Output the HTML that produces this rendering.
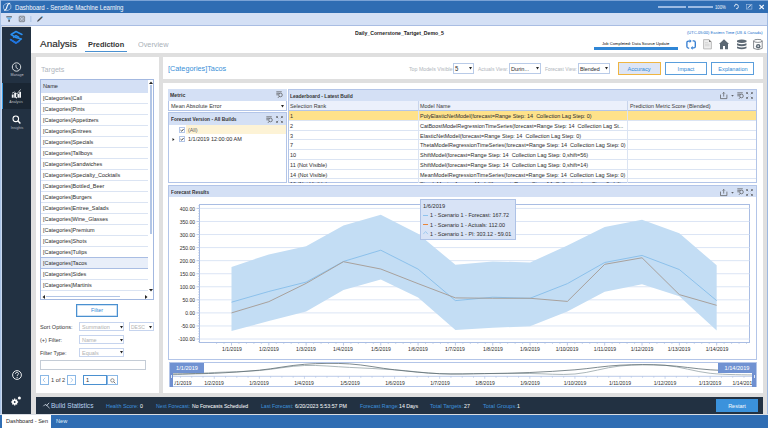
<!DOCTYPE html>
<html><head><meta charset="utf-8">
<style>
*{box-sizing:border-box;margin:0;padding:0}
html,body{width:768px;height:428px;overflow:hidden;background:#dfdfdf;font-family:"Liberation Sans",sans-serif;color:#333}
.a{position:absolute}
.t{position:absolute;white-space:pre;line-height:1}
.k{-webkit-text-stroke:0.03px currentColor}
svg{overflow:visible}
</style></head><body>
<div class="a" style="left:0px;top:0px;width:768px;height:13px;background:#2f6db3"></div>
<div class="a" style="left:0px;top:0px;width:768px;height:1px;background:#7aa3d6"></div>
<div class="a" style="left:0px;top:13px;width:768px;height:12px;background:#d4e0f5"></div>
<div class="a" style="left:0px;top:25px;width:768px;height:1px;background:#a9bde3"></div>
<div class="a" style="left:0px;top:0px;width:1px;height:428px;background:#a9c3e6"></div>
<div class="a" style="left:1px;top:26px;width:1px;height:389px;background:#c9d8ee"></div>
<div class="a" style="left:767px;top:13px;width:1px;height:402px;background:#9db8e0"></div>
<svg class="a" style="left:2px;top:1px;" width="12" height="12" viewBox="2 1 12 12"><ellipse cx="7.2" cy="6.9" rx="3.9" ry="3.5" fill="none" stroke="#c9d9ef" stroke-width="0.6" transform="rotate(-20 7.2 6.9)"/><path d="M10.2 3.2C8.2 3.2 7.6 4.2 7.2 6.2S6.4 10 4.2 10.4" fill="none" stroke="#f4f8fc" stroke-width="1.1"/></svg>
<div class="t k" style="font-size:6.55px;color:#f2f6fc;top:5px;transform:scaleX(0.9282);left:15px;transform-origin:0 0;">Dashboard - Sensible Machine Learning</div>
<div class="a" style="left:658px;top:6px;width:28px;height:2px;background:#9dbbe3"></div>
<div class="a" style="left:688px;top:6px;width:25px;height:2px;background:#9dbbe3"></div>
<div class="t k" style="font-size:4.50px;color:#e8eef8;top:6px;transform:scaleX(0.9333);left:715.3px;transform-origin:0 0;">100%</div>
<svg class="a" style="left:720px;top:0px;" width="48" height="13" viewBox="720 0 48 13"><g fill="none" stroke="#e3ebf6" stroke-width="0.9"><path d="M734.4 6.6Q734.4 4.4 736.4 4.4Q738.4 4.4 738.4 6.6Q738.4 8.6 736.4 8.6"/></g><path d="M735.6 3.6l1.3 0.8-1.3 0.9z" fill="#e3ebf6"/><path d="M737.2 7.8l-1.2 0.8 1.2 0.9z" fill="#e3ebf6"/><rect x="746.3" y="4.4" width="5.6" height="4.7" fill="none" stroke="#a7c1e4" stroke-width="0.6"/><path d="M747.6 8L750.4 5.6" stroke="#eef3fa" stroke-width="0.9"/><path d="M749.4 5.3h1.3v1.2z" fill="#eef3fa"/><path d="M759.5 5l4.3 4M763.8 5l-4.3 4" stroke="#f2f6fc" stroke-width="1.1"/></svg>
<svg class="a" style="left:0px;top:13px;" width="48" height="13" viewBox="0 13 48 13"><path d="M6.3 16.3h5.6v1.1H6.3z" fill="#4a4f55"/><path d="M6.6 17.6h5L10 19.8H8.2z" fill="#69b6ee"/><path d="M8.3 19.8h1.6v1.9H8.3z" fill="#4a4f55"/><rect x="19.2" y="16.2" width="5.4" height="5.5" rx="0.6" fill="none" stroke="#6b6f75" stroke-width="0.7"/><g fill="none" stroke="#6b6f75" stroke-width="0.55"><circle cx="20.6" cy="17.6" r="0.9"/><circle cx="23.2" cy="17.6" r="0.9"/><circle cx="20.6" cy="20.3" r="0.9"/><circle cx="23.2" cy="20.3" r="0.9"/></g><rect x="30.1" y="16" width="1.4" height="6" fill="#b6cbea"/><path d="M37 21.8L37.6 20.2 41.6 16.6 42.6 17.6 38.6 21.2z" fill="#4a4f55"/><path d="M41.4 16.8L42.2 16 43.2 17 42.4 17.8z" fill="#5bb0ec"/></svg>
<div class="a" style="left:2px;top:27px;width:29px;height:387px;background:#223142"></div>
<div class="a" style="left:2px;top:83px;width:29px;height:26px;background:#1a2633"></div>
<div class="a" style="left:2px;top:83px;width:1px;height:26px;background:#3b9be2"></div>
<svg class="a" style="left:6px;top:28px;" width="20" height="20" viewBox="6 28 20 20"><g fill="none" stroke-width="1.5" stroke-linejoin="round" stroke-linecap="round"><path d="M22 34.5L16 31.5 11.1 34.5 16 37.6 21.4 39 16 43 10.6 39.6" stroke="#2a8ff0"/><path d="M13.6 37.2L16 35.6 18.6 37.2" stroke="#2a8ff0"/><path d="M10.6 39.6L16 43 19 41.3" stroke="#1f72e0"/></g></svg>
<svg class="a" style="left:6px;top:58px;" width="22" height="22" viewBox="6 58 22 22"><circle cx="16.5" cy="67" r="4.2" fill="none" stroke="#f2f4f6" stroke-width="0.85"/><path d="M16 64.6V67.4L18.3 69.3" fill="none" stroke="#f2f4f6" stroke-width="0.8"/></svg>
<div class="t k" style="font-size:3.85px;color:#aeb6bf;top:74px;transform:scaleX(0.9351);left:-83.4px;width:200px;text-align:center;transform-origin:50% 0;">Manage</div>
<svg class="a" style="left:4px;top:84px;" width="26" height="24" viewBox="4 84 26 24"><g fill="#f4f6f8"><rect x="11.8" y="94.5" width="1.8" height="3.2"/><rect x="14.2" y="93" width="1.9" height="4.7"/><rect x="17.5" y="93.8" width="1.7" height="3.9"/><rect x="19.3" y="91.8" width="1.7" height="5.9"/><circle cx="16.4" cy="97.7" r="0.7"/></g><path d="M12 93.2L14.4 92 16.9 94 20.6 89.4" fill="none" stroke="#f4f6f8" stroke-width="0.7"/></svg>
<div class="t k" style="font-size:3.85px;color:#aeb6bf;top:101px;transform:scaleX(0.9351);left:-83.6px;width:200px;text-align:center;transform-origin:50% 0;">Analysis</div>
<svg class="a" style="left:12px;top:115px;" width="9" height="9" viewBox="0 0 9 9"><circle cx="3.8" cy="3.8" r="2.8" fill="none" stroke="#fff" stroke-width="1.1"/><path d="M5.8 5.8l2.6 2.6" stroke="#fff" stroke-width="1.4"/></svg>
<div class="t k" style="font-size:3.85px;color:#aeb6bf;top:127px;transform:scaleX(0.9351);left:-83.4px;width:200px;text-align:center;transform-origin:50% 0;">Insights</div>
<svg class="a" style="left:12px;top:370px;" width="10" height="10" viewBox="0 0 10 10"><circle cx="5" cy="5" r="4.4" fill="none" stroke="#fff" stroke-width="0.9"/><path d="M3.5 3.9c0-1 .7-1.6 1.5-1.6s1.5.6 1.5 1.4c0 1-1.4 1.1-1.4 2.2" fill="none" stroke="#fff" stroke-width="0.9"/><circle cx="5.1" cy="7.4" r="0.55" fill="#fff"/></svg>
<svg class="a" style="left:10px;top:396px;" width="12" height="10" viewBox="0 0 12 10"><circle cx="4.7" cy="6" r="2.6" fill="#fff"/><g stroke="#fff" stroke-width="1.3"><path d="M4.7 2.6v6.8M1.3 6h6.8M2.3 3.6l4.8 4.8M7.1 3.6l-4.8 4.8"/></g><circle cx="4.7" cy="6" r="0.9" fill="#223142"/><circle cx="9.4" cy="2" r="1.5" fill="#fff"/></svg>
<div class="a" style="left:31px;top:26px;width:736px;height:27px;background:#fff"></div>
<div class="t" style="font-size:9.95px;color:#262626;top:39px;left:40px;transform-origin:0 0;-webkit-text-stroke:0.15px #262626;">Analysis</div>
<div class="t" style="font-size:7.90px;color:#333;top:41px;transform:scaleX(0.9367);font-weight:bold;left:88.1px;transform-origin:0 0;">Prediction</div>
<div class="a" style="left:85px;top:51px;width:42px;height:1px;background:#4a90d0"></div>
<div class="t" style="font-size:7.80px;color:#a9b0b8;top:41px;transform:scaleX(0.9359);left:138.3px;transform-origin:0 0;">Overview</div>
<div class="t" style="font-size:5.55px;color:#222;top:31px;transform:scaleX(0.9315);font-weight:bold;left:354.5px;transform-origin:0 0;">Daily_Cornerstone_Tartget_Demo_5</div>
<div class="t k" style="font-size:4.30px;color:#2f7ad0;top:31px;transform:scaleX(0.9372);left:686.9px;transform-origin:0 0;">(UTC-05:00) Eastern Time (US &amp; Canada)</div>
<div class="t k" style="font-size:4.40px;color:#222;top:42px;transform:scaleX(0.9386);left:602px;transform-origin:0 0;">Job Completed: Data Source Update</div>
<div class="a" style="left:594px;top:47px;width:84px;height:3px;background:#2f86d6"></div>
<div class="a" style="left:36px;top:57px;width:123px;height:336px;background:#fff"></div>
<div class="t" style="font-size:7.65px;color:#b0b6bd;top:66px;transform:scaleX(0.9346);left:40.5px;transform-origin:0 0;">Targets</div>
<div class="a" style="left:40px;top:79px;width:114px;height:221px;border:1px solid #a3b8e0;background:#fff"></div>
<div class="a" style="left:41px;top:80px;width:107px;height:12.6px;background:#d4e0f5"></div>
<div class="t k" style="font-size:6.00px;color:#333;top:83px;transform:scaleX(0.9333);left:43px;transform-origin:0 0;">Name</div>
<div class="a" style="left:41px;top:103.0px;width:107px;height:0.7px;background:#dbe4f3"></div>
<div class="t k" style="font-size:5.90px;color:#333;top:96px;transform:scaleX(0.9322);left:43px;transform-origin:0 0;">[Categories]Call</div>
<div class="a" style="left:41px;top:114.0px;width:107px;height:0.7px;background:#dbe4f3"></div>
<div class="t k" style="font-size:5.90px;color:#333;top:107px;transform:scaleX(0.9322);left:43px;transform-origin:0 0;">[Categories]Pints</div>
<div class="a" style="left:41px;top:125.0px;width:107px;height:0.7px;background:#dbe4f3"></div>
<div class="t k" style="font-size:5.90px;color:#333;top:118px;transform:scaleX(0.9322);left:43px;transform-origin:0 0;">[Categories]Appetizers</div>
<div class="a" style="left:41px;top:136.0px;width:107px;height:0.7px;background:#dbe4f3"></div>
<div class="t k" style="font-size:5.90px;color:#333;top:129px;transform:scaleX(0.9322);left:43px;transform-origin:0 0;">[Categories]Entrees</div>
<div class="a" style="left:41px;top:147.0px;width:107px;height:0.7px;background:#dbe4f3"></div>
<div class="t k" style="font-size:5.90px;color:#333;top:140px;transform:scaleX(0.9322);left:43px;transform-origin:0 0;">[Categories]Specials</div>
<div class="a" style="left:41px;top:158.0px;width:107px;height:0.7px;background:#dbe4f3"></div>
<div class="t k" style="font-size:5.90px;color:#333;top:151px;transform:scaleX(0.9322);left:43px;transform-origin:0 0;">[Categories]Tallboys</div>
<div class="a" style="left:41px;top:169.0px;width:107px;height:0.7px;background:#dbe4f3"></div>
<div class="t k" style="font-size:5.90px;color:#333;top:162px;transform:scaleX(0.9322);left:43px;transform-origin:0 0;">[Categories]Sandwiches</div>
<div class="a" style="left:41px;top:180.0px;width:107px;height:0.7px;background:#dbe4f3"></div>
<div class="t k" style="font-size:5.90px;color:#333;top:173px;transform:scaleX(0.9322);left:43px;transform-origin:0 0;">[Categories]Specialty_Cocktails</div>
<div class="a" style="left:41px;top:191.0px;width:107px;height:0.7px;background:#dbe4f3"></div>
<div class="t k" style="font-size:5.90px;color:#333;top:184px;transform:scaleX(0.9322);left:43px;transform-origin:0 0;">[Categories]Bottled_Beer</div>
<div class="a" style="left:41px;top:202.0px;width:107px;height:0.7px;background:#dbe4f3"></div>
<div class="t k" style="font-size:5.90px;color:#333;top:195px;transform:scaleX(0.9322);left:43px;transform-origin:0 0;">[Categories]Burgers</div>
<div class="a" style="left:41px;top:213.0px;width:107px;height:0.7px;background:#dbe4f3"></div>
<div class="t k" style="font-size:5.90px;color:#333;top:206px;transform:scaleX(0.9322);left:43px;transform-origin:0 0;">[Categories]Entree_Salads</div>
<div class="a" style="left:41px;top:224.0px;width:107px;height:0.7px;background:#dbe4f3"></div>
<div class="t k" style="font-size:5.90px;color:#333;top:217px;transform:scaleX(0.9322);left:43px;transform-origin:0 0;">[Categories]Wine_Glasses</div>
<div class="a" style="left:41px;top:235.0px;width:107px;height:0.7px;background:#dbe4f3"></div>
<div class="t k" style="font-size:5.90px;color:#333;top:228px;transform:scaleX(0.9322);left:43px;transform-origin:0 0;">[Categories]Premium</div>
<div class="a" style="left:41px;top:246.0px;width:107px;height:0.7px;background:#dbe4f3"></div>
<div class="t k" style="font-size:5.90px;color:#333;top:239px;transform:scaleX(0.9322);left:43px;transform-origin:0 0;">[Categories]Shots</div>
<div class="a" style="left:41px;top:257.0px;width:107px;height:0.7px;background:#dbe4f3"></div>
<div class="t k" style="font-size:5.90px;color:#333;top:250px;transform:scaleX(0.9322);left:43px;transform-origin:0 0;">[Categories]Tulips</div>
<div class="a" style="left:41px;top:257.3px;width:107px;height:11.4px;background:#e8eef9;border-top:1px solid #a9bde3;border-bottom:1px solid #a9bde3"></div>
<div class="t k" style="font-size:5.90px;color:#333;top:261px;transform:scaleX(0.9322);left:43px;transform-origin:0 0;">[Categories]Tacos</div>
<div class="a" style="left:41px;top:279.0px;width:107px;height:0.7px;background:#dbe4f3"></div>
<div class="t k" style="font-size:5.90px;color:#333;top:272px;transform:scaleX(0.9322);left:43px;transform-origin:0 0;">[Categories]Sides</div>
<div class="a" style="left:41px;top:290.0px;width:107px;height:0.7px;background:#dbe4f3"></div>
<div class="t k" style="font-size:5.90px;color:#333;top:283px;transform:scaleX(0.9322);left:43px;transform-origin:0 0;">[Categories]Martinis</div>
<div class="a" style="left:148px;top:80px;width:5px;height:219px;background:#fff"></div>
<svg class="a" style="left:149px;top:81px;" width="4" height="3" viewBox="0 0 4 3"><path d="M0 3L2 0.5 4 3z" fill="#222"/></svg>
<div class="a" style="left:150px;top:85px;width:1.6px;height:149px;background:#b3c6e6"></div>
<svg class="a" style="left:149px;top:289px;" width="4" height="3" viewBox="0 0 4 3"><path d="M0 0L2 2.5 4 0z" fill="#222"/></svg>
<div class="a" style="left:41px;top:292px;width:107px;height:7px;background:#fff"></div>
<svg class="a" style="left:42px;top:294.5px;" width="3" height="4" viewBox="0 0 3 4"><path d="M3 0L0.5 2 3 4z" fill="#222"/></svg>
<div class="a" style="left:46px;top:295.6px;width:74px;height:1.4px;background:#b3c6e6"></div>
<svg class="a" style="left:145px;top:294.5px;" width="3" height="4" viewBox="0 0 3 4"><path d="M0 0L2.5 2 0 4z" fill="#222"/></svg>
<div class="a" style="left:76px;top:304px;width:42.4px;height:12.5px;border:1px solid #4a90d0;box-shadow:inset 0 0 0 0.5px #9cc4ea;background:#fff"></div>
<div class="t k" style="font-size:5.80px;color:#3a8fd8;top:308px;transform:scaleX(0.9310);left:-2.799999999999997px;width:200px;text-align:center;transform-origin:50% 0;">Filter</div>
<div class="t k" style="font-size:6.00px;color:#444;top:324px;transform:scaleX(0.9333);left:40px;transform-origin:0 0;">Sort Options:</div>
<div class="a" style="left:79.3px;top:322.3px;width:45.2px;height:9.2px;border:1px solid #c6d4ee;background:#fff"></div>
<div class="t k" style="font-size:5.90px;color:#b4b4b4;top:325px;transform:scaleX(0.9322);left:81.5px;transform-origin:0 0;">Summation</div>
<svg class="a" style="left:119.5px;top:325.70000000000005px;" width="3" height="2.5" viewBox="0 0 3 2.5"><path d="M0 0h3L1.5 2.5z" fill="#222"/></svg>
<div class="a" style="left:128.9px;top:322.3px;width:25.4px;height:9.2px;border:1px solid #c6d4ee;background:#fff"></div>
<div class="t k" style="font-size:5.35px;color:#b4b4b4;top:325px;transform:scaleX(0.9346);left:131.1px;transform-origin:0 0;">DESC</div>
<svg class="a" style="left:149.3px;top:325.70000000000005px;" width="3" height="2.5" viewBox="0 0 3 2.5"><path d="M0 0h3L1.5 2.5z" fill="#222"/></svg>
<div class="t k" style="font-size:5.90px;color:#444;top:338px;transform:scaleX(0.9322);left:40px;transform-origin:0 0;">(+) Filter:</div>
<div class="a" style="left:79.3px;top:335.2px;width:45.2px;height:9.2px;border:1px solid #c6d4ee;background:#fff"></div>
<div class="t k" style="font-size:5.90px;color:#b4b4b4;top:338px;transform:scaleX(0.9322);left:81.5px;transform-origin:0 0;">Name</div>
<svg class="a" style="left:119.5px;top:338.6px;" width="3" height="2.5" viewBox="0 0 3 2.5"><path d="M0 0h3L1.5 2.5z" fill="#222"/></svg>
<div class="t k" style="font-size:5.80px;color:#444;top:351px;transform:scaleX(0.9310);left:40px;transform-origin:0 0;">Filter Type:</div>
<div class="a" style="left:79.3px;top:348px;width:45.2px;height:9px;border:1px solid #c6d4ee;background:#fff"></div>
<div class="t k" style="font-size:5.90px;color:#b4b4b4;top:351px;transform:scaleX(0.9322);left:81.5px;transform-origin:0 0;">Equals</div>
<svg class="a" style="left:119.5px;top:351.3px;" width="3" height="2.5" viewBox="0 0 3 2.5"><path d="M0 0h3L1.5 2.5z" fill="#222"/></svg>
<div class="a" style="left:40px;top:360.2px;width:106px;height:9.8px;border:1px solid #c4ccd6;background:#fff"></div>
<div class="a" style="left:40px;top:375.2px;width:8.6px;height:9.7px;border:1px solid #8ab8e6;background:#fff"></div>
<svg class="a" style="left:42px;top:377px;" width="5" height="6" viewBox="0 0 5 6"><path d="M3.2 0.8L1 3 3.2 5.2" fill="none" stroke="#8ab8e6" stroke-width="0.7"/></svg>
<div class="t k" style="font-size:6.10px;color:#444;top:377px;transform:scaleX(0.9344);left:50.9px;transform-origin:0 0;">1 of 2</div>
<div class="a" style="left:67.2px;top:375.2px;width:8.4px;height:9.7px;border:1px solid #8ab8e6;background:#fff"></div>
<svg class="a" style="left:69px;top:377px;" width="5" height="6" viewBox="0 0 5 6"><path d="M1.6 0.8L3.8 3 1.6 5.2" fill="none" stroke="#8ab8e6" stroke-width="0.7"/></svg>
<div class="a" style="left:83.2px;top:375.2px;width:23.4px;height:9.7px;border:1px solid #4a90d0;background:#fff"></div>
<div class="t k" style="font-size:6.00px;color:#333;top:377px;transform:scaleX(0.9333);left:86px;transform-origin:0 0;">1</div>
<div class="a" style="left:106.6px;top:375.2px;width:11px;height:9.7px;border:1px solid #8ab8e6;background:#fff"></div>
<svg class="a" style="left:109.5px;top:377.5px;" width="6" height="6" viewBox="0 0 6 6"><circle cx="2.4" cy="2.4" r="1.7" fill="none" stroke="#777" stroke-width="0.8"/><path d="M3.6 3.6l1.8 1.8" stroke="#777" stroke-width="1"/></svg>
<div class="a" style="left:163px;top:57px;width:600px;height:22px;background:#fff"></div>
<div class="t" style="font-size:7.80px;color:#3a8fd8;top:65px;transform:scaleX(0.9333);left:167.7px;transform-origin:0 0;">[Categories]Tacos</div>
<div class="t k" style="font-size:5.60px;color:#b4b9c1;top:67px;transform:scaleX(0.9375);left:408.5px;transform-origin:0 0;">Top Models Visible:</div>
<div class="a" style="left:452.9px;top:62.8px;width:21.1px;height:11px;border:1px solid #b9cbe8;background:#fff"></div>
<div class="t k" style="font-size:6.40px;color:#333;top:66px;transform:scaleX(0.9375);left:454.7px;transform-origin:0 0;">5</div>
<svg class="a" style="left:469.0px;top:67.1px;" width="3" height="2.5" viewBox="0 0 3 2.5"><path d="M0 0h3L1.5 2.5z" fill="#222"/></svg>
<div class="t k" style="font-size:5.35px;color:#b4b9c1;top:67px;transform:scaleX(0.9346);left:478px;transform-origin:0 0;">Actuals View:</div>
<div class="a" style="left:509px;top:62.8px;width:31.6px;height:11px;border:1px solid #b9cbe8;background:#fff"></div>
<div class="t k" style="font-size:6.00px;color:#333;top:66px;transform:scaleX(0.9333);left:510.8px;transform-origin:0 0;">Durin...</div>
<svg class="a" style="left:535.6px;top:67.1px;" width="3" height="2.5" viewBox="0 0 3 2.5"><path d="M0 0h3L1.5 2.5z" fill="#222"/></svg>
<div class="t k" style="font-size:5.20px;color:#b4b9c1;top:67px;transform:scaleX(0.9365);left:544.8px;transform-origin:0 0;">Forecast View:</div>
<div class="a" style="left:578px;top:63px;width:32px;height:10.8px;border:1px solid #b9cbe8;background:#fff"></div>
<div class="t k" style="font-size:5.80px;color:#333;top:67px;transform:scaleX(0.9310);left:579.8px;transform-origin:0 0;">Blended</div>
<svg class="a" style="left:605px;top:67.2px;" width="3" height="2.5" viewBox="0 0 3 2.5"><path d="M0 0h3L1.5 2.5z" fill="#222"/></svg>
<div class="a" style="left:618px;top:61.6px;width:42.7px;height:13.4px;border:1.5px solid #f0b540;background:#dde5f5"></div>
<div class="t k" style="font-size:6.00px;color:#3a8fd8;top:66px;transform:scaleX(0.9333);left:539.3px;width:200px;text-align:center;transform-origin:50% 0;">Accuracy</div>
<div class="a" style="left:664.8px;top:61.8px;width:42.1px;height:13px;border:1px solid #5a9edc;background:#fff"></div>
<div class="t k" style="font-size:6.00px;color:#3a8fd8;top:66px;transform:scaleX(0.9333);left:585.8px;width:200px;text-align:center;transform-origin:50% 0;">Impact</div>
<div class="a" style="left:711.2px;top:61.8px;width:42.6px;height:13px;border:1px solid #5a9edc;background:#fff"></div>
<div class="t k" style="font-size:6.00px;color:#3a8fd8;top:66px;transform:scaleX(0.9333);left:632.5px;width:200px;text-align:center;transform-origin:50% 0;">Explanation</div>
<div class="a" style="left:163px;top:83px;width:600px;height:310px;background:#fff"></div>
<div class="a" style="left:168px;top:89px;width:118.5px;height:12px;background:#d4e0f5"></div>
<div class="t" style="font-size:5.55px;color:#333;top:93px;transform:scaleX(0.9369);font-weight:bold;left:170.25px;transform-origin:0 0;">Metric</div>
<svg class="a" style="left:276px;top:91px;" width="7" height="7" viewBox="0 0 7 7"><path d="M0.3 0.8h5.5M0.3 2.3h3M0.3 3.8h2" stroke="#555" stroke-width="0.7"/><circle cx="4.5" cy="4" r="1.8" fill="none" stroke="#555" stroke-width="0.7"/><path d="M3.3 5.3L2 6.8" stroke="#555" stroke-width="0.8"/></svg>
<div class="a" style="left:168px;top:101px;width:118.5px;height:9.5px;border:1px solid #b3c5e8;border-top:none;background:#fff"></div>
<div class="t k" style="font-size:5.95px;color:#444;top:104px;transform:scaleX(0.9328);left:170.9px;transform-origin:0 0;">Mean Absolute Error</div>
<svg class="a" style="left:281px;top:105px;" width="3" height="2.5" viewBox="0 0 3 2.5"><path d="M0 0h3L1.5 2.5z" fill="#222"/></svg>
<div class="a" style="left:168px;top:112.3px;width:119px;height:71px;border:1px solid #b3c5e8;background:#fff"></div>
<div class="a" style="left:169px;top:113.3px;width:117px;height:11.3px;background:#d4e0f5"></div>
<div class="t" style="font-size:5.20px;color:#333;top:117px;transform:scaleX(0.9346);font-weight:bold;left:170.9px;transform-origin:0 0;">Forecast Version - All Builds</div>
<svg class="a" style="left:265.8px;top:115.5px;" width="7" height="7" viewBox="0 0 7 7"><path d="M0.3 0.8h5.5M0.3 2.3h3M0.3 3.8h2" stroke="#555" stroke-width="0.7"/><circle cx="4.5" cy="4" r="1.8" fill="none" stroke="#555" stroke-width="0.7"/><path d="M3.3 5.3L2 6.8" stroke="#555" stroke-width="0.8"/></svg>
<svg class="a" style="left:275.7px;top:115.8px;" width="7" height="7" viewBox="0 0 7 7"><g stroke="#555" stroke-width="0.7" fill="none"><path d="M0.6 0.6l1.6 1.6M0.6 0.6h1.3M0.6 0.6v1.3"/><path d="M6.4 0.6l-1.6 1.6M6.4 0.6h-1.3M6.4 0.6v1.3"/><path d="M0.6 6.4l1.6-1.6M0.6 6.4h1.3M0.6 6.4v-1.3"/><path d="M6.4 6.4l-1.6-1.6M6.4 6.4h-1.3M6.4 6.4v-1.3"/></g></svg>
<div class="a" style="left:186px;top:125.3px;width:100.3px;height:8.6px;background:#fdf3d6"></div>
<div class="a" style="left:178.6px;top:126.7px;width:6px;height:6.2px;border:1px solid #b3c6e8;background:#fff"></div>
<svg class="a" style="left:179.6px;top:127.7px;" width="4" height="4" viewBox="0 0 4 4"><path d="M0.5 2.1L1.7 3.2 3.6 1" fill="none" stroke="#222" stroke-width="0.8"/></svg>
<div class="t k" style="font-size:5.70px;color:#666;top:128px;transform:scaleX(0.9386);left:187.7px;transform-origin:0 0;">(All)</div>
<svg class="a" style="left:172.3px;top:137.6px;" width="3" height="3" viewBox="0 0 3 3"><path d="M0.5 0L2.5 1.5 0.5 3z" fill="#222"/></svg>
<div class="a" style="left:178.6px;top:136.2px;width:6px;height:6.2px;border:1px solid #b3c6e8;background:#fff"></div>
<svg class="a" style="left:179.6px;top:137.2px;" width="4" height="4" viewBox="0 0 4 4"><path d="M0.5 2.1L1.7 3.2 3.6 1" fill="none" stroke="#222" stroke-width="0.8"/></svg>
<div class="t k" style="font-size:5.90px;color:#333;top:137px;transform:scaleX(0.9322);left:187.9px;transform-origin:0 0;">1/1/2019 12:00:00 AM</div>
<div class="a" style="left:288px;top:89px;width:469px;height:94.2px;border:1px solid #b3c5e8;background:#fff"></div>
<div class="a" style="left:289px;top:90px;width:467px;height:11px;background:#d4e0f5"></div>
<div class="t" style="font-size:5.30px;color:#333;top:94px;transform:scaleX(0.9340);font-weight:bold;left:290.4px;transform-origin:0 0;">Leaderboard - Latest Build</div>
<svg class="a" style="left:720.3px;top:92.2px;" width="14" height="7" viewBox="0 0 14 7"><path d="M0.5 2.6v4h6.4v-4" fill="none" stroke="#555" stroke-width="0.7"/><path d="M3.7 4.6V0.5M2.6 1.5L3.7 0.4 4.8 1.5" fill="none" stroke="#555" stroke-width="0.7"/><path d="M11.2 3.3h2.6l-1.3 1.3z" fill="#333"/></svg>
<svg class="a" style="left:736.6px;top:92px;" width="7" height="7" viewBox="0 0 7 7"><path d="M0.3 0.8h5.5M0.3 2.3h3M0.3 3.8h2" stroke="#555" stroke-width="0.7"/><circle cx="4.5" cy="4" r="1.8" fill="none" stroke="#555" stroke-width="0.7"/><path d="M3.3 5.3L2 6.8" stroke="#555" stroke-width="0.8"/></svg>
<svg class="a" style="left:746.4px;top:92.2px;" width="7" height="7" viewBox="0 0 7 7"><g stroke="#555" stroke-width="0.7" fill="none"><path d="M0.6 0.6l1.6 1.6M0.6 0.6h1.3M0.6 0.6v1.3"/><path d="M6.4 0.6l-1.6 1.6M6.4 0.6h-1.3M6.4 0.6v1.3"/><path d="M0.6 6.4l1.6-1.6M0.6 6.4h1.3M0.6 6.4v-1.3"/><path d="M6.4 6.4l-1.6-1.6M6.4 6.4h-1.3M6.4 6.4v-1.3"/></g></svg>
<div class="a" style="left:289px;top:101px;width:467px;height:9.5px;background:#ebf0fb;border-bottom:1px solid #b3c5e8"></div>
<div class="t k" style="font-size:5.75px;color:#444;top:104px;transform:scaleX(0.9357);left:290.2px;transform-origin:0 0;">Selection Rank</div>
<div class="t k" style="font-size:5.75px;color:#444;top:104px;transform:scaleX(0.9357);left:419.9px;transform-origin:0 0;">Model Name</div>
<div class="t k" style="font-size:5.75px;color:#444;top:104px;transform:scaleX(0.9357);left:629.5px;transform-origin:0 0;">Prediction Metric Score (Blended)</div>
<div class="a" style="left:289px;top:110.5px;width:467px;height:72.5px;overflow:hidden">
<div class="a" style="left:0;top:0.0px;width:467px;height:9.9px;background:#fee28a"></div>
<div class="t k" style="font-size:5.90px;color:#333;top:3px;transform:scaleX(0.9322);left:1.2px;transform-origin:0 0;">1</div>
<div class="t k" style="font-size:5.90px;color:#333;top:3px;transform:scaleX(0.9322);left:130.9px;transform-origin:0 0;">PolyElasticNetModel(forecast=Range Step: 14  Collection Lag Step: 0)</div>
<div class="a" style="left:0;top:9.25px;width:467px;height:0.8px;background:#dbe4f3"></div>
<div class="t k" style="font-size:5.90px;color:#333;top:13px;transform:scaleX(0.9322);left:1.2px;transform-origin:0 0;">2</div>
<div class="t k" style="font-size:5.85px;color:#333;top:13px;transform:scaleX(0.9333);left:130.9px;transform-origin:0 0;">CatBoostModelRegressionTimeSeries(forecast=Range Step: 14  Collection Lag St...</div>
<div class="a" style="left:0;top:19.0px;width:467px;height:0.8px;background:#dbe4f3"></div>
<div class="t k" style="font-size:5.90px;color:#333;top:23px;transform:scaleX(0.9322);left:1.2px;transform-origin:0 0;">3</div>
<div class="t k" style="font-size:5.90px;color:#333;top:23px;transform:scaleX(0.9322);left:130.9px;transform-origin:0 0;">ElasticNetModel(forecast=Range Step: 14  Collection Lag Step: 0)</div>
<div class="a" style="left:0;top:28.75px;width:467px;height:0.8px;background:#dbe4f3"></div>
<div class="t k" style="font-size:5.90px;color:#333;top:32px;transform:scaleX(0.9322);left:1.2px;transform-origin:0 0;">7</div>
<div class="t k" style="font-size:5.90px;color:#333;top:32px;transform:scaleX(0.9322);left:130.9px;transform-origin:0 0;">ThetaModelRegressionTimeSeries(forecast=Range Step: 14  Collection Lag Step: 0)</div>
<div class="a" style="left:0;top:38.5px;width:467px;height:0.8px;background:#dbe4f3"></div>
<div class="t k" style="font-size:5.90px;color:#333;top:42px;transform:scaleX(0.9322);left:1.2px;transform-origin:0 0;">10</div>
<div class="t k" style="font-size:5.90px;color:#333;top:42px;transform:scaleX(0.9322);left:130.9px;transform-origin:0 0;">ShiftModel(forecast=Range Step: 14  Collection Lag Step: 0,shift=56)</div>
<div class="a" style="left:0;top:48.25px;width:467px;height:0.8px;background:#dbe4f3"></div>
<div class="t k" style="font-size:5.90px;color:#333;top:52px;transform:scaleX(0.9322);left:1.2px;transform-origin:0 0;">11 (Not Visible)</div>
<div class="t k" style="font-size:5.90px;color:#333;top:52px;transform:scaleX(0.9322);left:130.9px;transform-origin:0 0;">ShiftModel(forecast=Range Step: 14  Collection Lag Step: 0,shift=14)</div>
<div class="a" style="left:0;top:58.0px;width:467px;height:0.8px;background:#dbe4f3"></div>
<div class="t k" style="font-size:5.90px;color:#333;top:62px;transform:scaleX(0.9322);left:1.2px;transform-origin:0 0;">14 (Not Visible)</div>
<div class="t k" style="font-size:5.90px;color:#333;top:62px;transform:scaleX(0.9322);left:130.9px;transform-origin:0 0;">MeanModelRegressionTimeSeries(forecast=Range Step: 14  Collection Lag Step: 0)</div>
<div class="a" style="left:0;top:67.75px;width:467px;height:0.8px;background:#dbe4f3"></div>
<div class="t k" style="font-size:5.90px;color:#333;top:71px;transform:scaleX(0.9322);left:1.2px;transform-origin:0 0;">16 (Not Visible)</div>
<div class="t k" style="font-size:5.90px;color:#333;top:71px;transform:scaleX(0.9322);left:130.9px;transform-origin:0 0;">SimpleMovingAverageModel(forecast=Range Step: 14  Collection Lag Step: 0,shift...</div>
<div class="a" style="left:128.5px;top:0;width:0.8px;height:73px;background:#dbe4f3"></div>
<div class="a" style="left:338px;top:0;width:0.8px;height:73px;background:#dbe4f3"></div>
</div>
<div class="a" style="left:417.5px;top:101px;width:0.8px;height:9.5px;background:#c7d4ec"></div>
<div class="a" style="left:627px;top:101px;width:0.8px;height:9.5px;background:#c7d4ec"></div>
<div class="a" style="left:168.4px;top:185.4px;width:388.6px;height:0px;"></div>
<div class="a" style="left:168.4px;top:185.4px;width:588.4px;height:174.6px;border:1px solid #b3c5e8;background:#fff"></div>
<div class="a" style="left:169.4px;top:186.4px;width:586.4px;height:10.8px;background:#d4e0f5"></div>
<div class="t" style="font-size:5.05px;color:#333;top:190px;transform:scaleX(0.9347);font-weight:bold;left:170.8px;transform-origin:0 0;">Forecast Results</div>
<svg class="a" style="left:720.3px;top:188.5px;" width="14" height="7" viewBox="0 0 14 7"><path d="M0.5 2.6v4h6.4v-4" fill="none" stroke="#555" stroke-width="0.7"/><path d="M3.7 4.6V0.5M2.6 1.5L3.7 0.4 4.8 1.5" fill="none" stroke="#555" stroke-width="0.7"/><path d="M11.2 3.3h2.6l-1.3 1.3z" fill="#333"/></svg>
<svg class="a" style="left:736.6px;top:188.3px;" width="7" height="7" viewBox="0 0 7 7"><path d="M0.3 0.8h5.5M0.3 2.3h3M0.3 3.8h2" stroke="#555" stroke-width="0.7"/><circle cx="4.5" cy="4" r="1.8" fill="none" stroke="#555" stroke-width="0.7"/><path d="M3.3 5.3L2 6.8" stroke="#555" stroke-width="0.8"/></svg>
<svg class="a" style="left:746.4px;top:188.5px;" width="7" height="7" viewBox="0 0 7 7"><g stroke="#555" stroke-width="0.7" fill="none"><path d="M0.6 0.6l1.6 1.6M0.6 0.6h1.3M0.6 0.6v1.3"/><path d="M6.4 0.6l-1.6 1.6M6.4 0.6h-1.3M6.4 0.6v1.3"/><path d="M0.6 6.4l1.6-1.6M0.6 6.4h1.3M0.6 6.4v-1.3"/><path d="M6.4 6.4l-1.6-1.6M6.4 6.4h-1.3M6.4 6.4v-1.3"/></g></svg>
<svg class="a" style="left:0;top:0" width="768" height="428" viewBox="0 0 768 428"><rect x="199.5" y="204.5" width="550.0" height="138.0" fill="#fff" stroke="#a9bde3" stroke-width="1"/><line x1="199.5" x2="749.5" y1="208.42" y2="208.42" stroke="#dbe5f5" stroke-width="1"/><line x1="196.5" x2="199.5" y1="208.42" y2="208.42" stroke="#a9bde3" stroke-width="0.8"/><line x1="199.5" x2="749.5" y1="221.48" y2="221.48" stroke="#dbe5f5" stroke-width="1"/><line x1="196.5" x2="199.5" y1="221.48" y2="221.48" stroke="#a9bde3" stroke-width="0.8"/><line x1="199.5" x2="749.5" y1="234.54" y2="234.54" stroke="#dbe5f5" stroke-width="1"/><line x1="196.5" x2="199.5" y1="234.54" y2="234.54" stroke="#a9bde3" stroke-width="0.8"/><line x1="199.5" x2="749.5" y1="247.60" y2="247.60" stroke="#dbe5f5" stroke-width="1"/><line x1="196.5" x2="199.5" y1="247.60" y2="247.60" stroke="#a9bde3" stroke-width="0.8"/><line x1="199.5" x2="749.5" y1="260.66" y2="260.66" stroke="#dbe5f5" stroke-width="1"/><line x1="196.5" x2="199.5" y1="260.66" y2="260.66" stroke="#a9bde3" stroke-width="0.8"/><line x1="199.5" x2="749.5" y1="273.72" y2="273.72" stroke="#dbe5f5" stroke-width="1"/><line x1="196.5" x2="199.5" y1="273.72" y2="273.72" stroke="#a9bde3" stroke-width="0.8"/><line x1="199.5" x2="749.5" y1="286.78" y2="286.78" stroke="#dbe5f5" stroke-width="1"/><line x1="196.5" x2="199.5" y1="286.78" y2="286.78" stroke="#a9bde3" stroke-width="0.8"/><line x1="199.5" x2="749.5" y1="299.84" y2="299.84" stroke="#dbe5f5" stroke-width="1"/><line x1="196.5" x2="199.5" y1="299.84" y2="299.84" stroke="#a9bde3" stroke-width="0.8"/><line x1="199.5" x2="749.5" y1="312.90" y2="312.90" stroke="#dbe5f5" stroke-width="1"/><line x1="196.5" x2="199.5" y1="312.90" y2="312.90" stroke="#a9bde3" stroke-width="0.8"/><line x1="199.5" x2="749.5" y1="325.96" y2="325.96" stroke="#dbe5f5" stroke-width="1"/><line x1="196.5" x2="199.5" y1="325.96" y2="325.96" stroke="#a9bde3" stroke-width="0.8"/><line x1="199.5" x2="749.5" y1="339.02" y2="339.02" stroke="#dbe5f5" stroke-width="1"/><line x1="196.5" x2="199.5" y1="339.02" y2="339.02" stroke="#a9bde3" stroke-width="0.8"/><line x1="198.0" x2="199.5" y1="341.63" y2="341.63" stroke="#a9bde3" stroke-width="0.6"/><line x1="198.0" x2="199.5" y1="339.02" y2="339.02" stroke="#a9bde3" stroke-width="0.6"/><line x1="198.0" x2="199.5" y1="336.41" y2="336.41" stroke="#a9bde3" stroke-width="0.6"/><line x1="198.0" x2="199.5" y1="333.80" y2="333.80" stroke="#a9bde3" stroke-width="0.6"/><line x1="198.0" x2="199.5" y1="331.18" y2="331.18" stroke="#a9bde3" stroke-width="0.6"/><line x1="198.0" x2="199.5" y1="328.57" y2="328.57" stroke="#a9bde3" stroke-width="0.6"/><line x1="198.0" x2="199.5" y1="325.96" y2="325.96" stroke="#a9bde3" stroke-width="0.6"/><line x1="198.0" x2="199.5" y1="323.35" y2="323.35" stroke="#a9bde3" stroke-width="0.6"/><line x1="198.0" x2="199.5" y1="320.74" y2="320.74" stroke="#a9bde3" stroke-width="0.6"/><line x1="198.0" x2="199.5" y1="318.12" y2="318.12" stroke="#a9bde3" stroke-width="0.6"/><line x1="198.0" x2="199.5" y1="315.51" y2="315.51" stroke="#a9bde3" stroke-width="0.6"/><line x1="198.0" x2="199.5" y1="312.90" y2="312.90" stroke="#a9bde3" stroke-width="0.6"/><line x1="198.0" x2="199.5" y1="310.29" y2="310.29" stroke="#a9bde3" stroke-width="0.6"/><line x1="198.0" x2="199.5" y1="307.68" y2="307.68" stroke="#a9bde3" stroke-width="0.6"/><line x1="198.0" x2="199.5" y1="305.06" y2="305.06" stroke="#a9bde3" stroke-width="0.6"/><line x1="198.0" x2="199.5" y1="302.45" y2="302.45" stroke="#a9bde3" stroke-width="0.6"/><line x1="198.0" x2="199.5" y1="299.84" y2="299.84" stroke="#a9bde3" stroke-width="0.6"/><line x1="198.0" x2="199.5" y1="297.23" y2="297.23" stroke="#a9bde3" stroke-width="0.6"/><line x1="198.0" x2="199.5" y1="294.62" y2="294.62" stroke="#a9bde3" stroke-width="0.6"/><line x1="198.0" x2="199.5" y1="292.00" y2="292.00" stroke="#a9bde3" stroke-width="0.6"/><line x1="198.0" x2="199.5" y1="289.39" y2="289.39" stroke="#a9bde3" stroke-width="0.6"/><line x1="198.0" x2="199.5" y1="286.78" y2="286.78" stroke="#a9bde3" stroke-width="0.6"/><line x1="198.0" x2="199.5" y1="284.17" y2="284.17" stroke="#a9bde3" stroke-width="0.6"/><line x1="198.0" x2="199.5" y1="281.56" y2="281.56" stroke="#a9bde3" stroke-width="0.6"/><line x1="198.0" x2="199.5" y1="278.94" y2="278.94" stroke="#a9bde3" stroke-width="0.6"/><line x1="198.0" x2="199.5" y1="276.33" y2="276.33" stroke="#a9bde3" stroke-width="0.6"/><line x1="198.0" x2="199.5" y1="273.72" y2="273.72" stroke="#a9bde3" stroke-width="0.6"/><line x1="198.0" x2="199.5" y1="271.11" y2="271.11" stroke="#a9bde3" stroke-width="0.6"/><line x1="198.0" x2="199.5" y1="268.50" y2="268.50" stroke="#a9bde3" stroke-width="0.6"/><line x1="198.0" x2="199.5" y1="265.88" y2="265.88" stroke="#a9bde3" stroke-width="0.6"/><line x1="198.0" x2="199.5" y1="263.27" y2="263.27" stroke="#a9bde3" stroke-width="0.6"/><line x1="198.0" x2="199.5" y1="260.66" y2="260.66" stroke="#a9bde3" stroke-width="0.6"/><line x1="198.0" x2="199.5" y1="258.05" y2="258.05" stroke="#a9bde3" stroke-width="0.6"/><line x1="198.0" x2="199.5" y1="255.44" y2="255.44" stroke="#a9bde3" stroke-width="0.6"/><line x1="198.0" x2="199.5" y1="252.82" y2="252.82" stroke="#a9bde3" stroke-width="0.6"/><line x1="198.0" x2="199.5" y1="250.21" y2="250.21" stroke="#a9bde3" stroke-width="0.6"/><line x1="198.0" x2="199.5" y1="247.60" y2="247.60" stroke="#a9bde3" stroke-width="0.6"/><line x1="198.0" x2="199.5" y1="244.99" y2="244.99" stroke="#a9bde3" stroke-width="0.6"/><line x1="198.0" x2="199.5" y1="242.38" y2="242.38" stroke="#a9bde3" stroke-width="0.6"/><line x1="198.0" x2="199.5" y1="239.76" y2="239.76" stroke="#a9bde3" stroke-width="0.6"/><line x1="198.0" x2="199.5" y1="237.15" y2="237.15" stroke="#a9bde3" stroke-width="0.6"/><line x1="198.0" x2="199.5" y1="234.54" y2="234.54" stroke="#a9bde3" stroke-width="0.6"/><line x1="198.0" x2="199.5" y1="231.93" y2="231.93" stroke="#a9bde3" stroke-width="0.6"/><line x1="198.0" x2="199.5" y1="229.32" y2="229.32" stroke="#a9bde3" stroke-width="0.6"/><line x1="198.0" x2="199.5" y1="226.70" y2="226.70" stroke="#a9bde3" stroke-width="0.6"/><line x1="198.0" x2="199.5" y1="224.09" y2="224.09" stroke="#a9bde3" stroke-width="0.6"/><line x1="198.0" x2="199.5" y1="221.48" y2="221.48" stroke="#a9bde3" stroke-width="0.6"/><line x1="198.0" x2="199.5" y1="218.87" y2="218.87" stroke="#a9bde3" stroke-width="0.6"/><line x1="198.0" x2="199.5" y1="216.26" y2="216.26" stroke="#a9bde3" stroke-width="0.6"/><line x1="198.0" x2="199.5" y1="213.64" y2="213.64" stroke="#a9bde3" stroke-width="0.6"/><line x1="198.0" x2="199.5" y1="211.03" y2="211.03" stroke="#a9bde3" stroke-width="0.6"/><line x1="198.0" x2="199.5" y1="208.42" y2="208.42" stroke="#a9bde3" stroke-width="0.6"/><line x1="198.0" x2="199.5" y1="205.81" y2="205.81" stroke="#a9bde3" stroke-width="0.6"/><line x1="216.57" x2="216.57" y1="342.5" y2="344.0" stroke="#a9bde3" stroke-width="0.6"/><line x1="224.04" x2="224.04" y1="342.5" y2="344.0" stroke="#a9bde3" stroke-width="0.6"/><line x1="231.50" x2="231.50" y1="342.5" y2="345.5" stroke="#a9bde3" stroke-width="0.8"/><line x1="238.96" x2="238.96" y1="342.5" y2="344.0" stroke="#a9bde3" stroke-width="0.6"/><line x1="246.43" x2="246.43" y1="342.5" y2="344.0" stroke="#a9bde3" stroke-width="0.6"/><line x1="253.89" x2="253.89" y1="342.5" y2="344.0" stroke="#a9bde3" stroke-width="0.6"/><line x1="261.36" x2="261.36" y1="342.5" y2="344.0" stroke="#a9bde3" stroke-width="0.6"/><line x1="268.82" x2="268.82" y1="342.5" y2="345.5" stroke="#a9bde3" stroke-width="0.8"/><line x1="276.28" x2="276.28" y1="342.5" y2="344.0" stroke="#a9bde3" stroke-width="0.6"/><line x1="283.75" x2="283.75" y1="342.5" y2="344.0" stroke="#a9bde3" stroke-width="0.6"/><line x1="291.21" x2="291.21" y1="342.5" y2="344.0" stroke="#a9bde3" stroke-width="0.6"/><line x1="298.68" x2="298.68" y1="342.5" y2="344.0" stroke="#a9bde3" stroke-width="0.6"/><line x1="306.14" x2="306.14" y1="342.5" y2="345.5" stroke="#a9bde3" stroke-width="0.8"/><line x1="313.60" x2="313.60" y1="342.5" y2="344.0" stroke="#a9bde3" stroke-width="0.6"/><line x1="321.07" x2="321.07" y1="342.5" y2="344.0" stroke="#a9bde3" stroke-width="0.6"/><line x1="328.53" x2="328.53" y1="342.5" y2="344.0" stroke="#a9bde3" stroke-width="0.6"/><line x1="336.00" x2="336.00" y1="342.5" y2="344.0" stroke="#a9bde3" stroke-width="0.6"/><line x1="343.46" x2="343.46" y1="342.5" y2="345.5" stroke="#a9bde3" stroke-width="0.8"/><line x1="350.92" x2="350.92" y1="342.5" y2="344.0" stroke="#a9bde3" stroke-width="0.6"/><line x1="358.39" x2="358.39" y1="342.5" y2="344.0" stroke="#a9bde3" stroke-width="0.6"/><line x1="365.85" x2="365.85" y1="342.5" y2="344.0" stroke="#a9bde3" stroke-width="0.6"/><line x1="373.32" x2="373.32" y1="342.5" y2="344.0" stroke="#a9bde3" stroke-width="0.6"/><line x1="380.78" x2="380.78" y1="342.5" y2="345.5" stroke="#a9bde3" stroke-width="0.8"/><line x1="388.24" x2="388.24" y1="342.5" y2="344.0" stroke="#a9bde3" stroke-width="0.6"/><line x1="395.71" x2="395.71" y1="342.5" y2="344.0" stroke="#a9bde3" stroke-width="0.6"/><line x1="403.17" x2="403.17" y1="342.5" y2="344.0" stroke="#a9bde3" stroke-width="0.6"/><line x1="410.64" x2="410.64" y1="342.5" y2="344.0" stroke="#a9bde3" stroke-width="0.6"/><line x1="418.10" x2="418.10" y1="342.5" y2="345.5" stroke="#a9bde3" stroke-width="0.8"/><line x1="425.56" x2="425.56" y1="342.5" y2="344.0" stroke="#a9bde3" stroke-width="0.6"/><line x1="433.03" x2="433.03" y1="342.5" y2="344.0" stroke="#a9bde3" stroke-width="0.6"/><line x1="440.49" x2="440.49" y1="342.5" y2="344.0" stroke="#a9bde3" stroke-width="0.6"/><line x1="447.96" x2="447.96" y1="342.5" y2="344.0" stroke="#a9bde3" stroke-width="0.6"/><line x1="455.42" x2="455.42" y1="342.5" y2="345.5" stroke="#a9bde3" stroke-width="0.8"/><line x1="462.88" x2="462.88" y1="342.5" y2="344.0" stroke="#a9bde3" stroke-width="0.6"/><line x1="470.35" x2="470.35" y1="342.5" y2="344.0" stroke="#a9bde3" stroke-width="0.6"/><line x1="477.81" x2="477.81" y1="342.5" y2="344.0" stroke="#a9bde3" stroke-width="0.6"/><line x1="485.28" x2="485.28" y1="342.5" y2="344.0" stroke="#a9bde3" stroke-width="0.6"/><line x1="492.74" x2="492.74" y1="342.5" y2="345.5" stroke="#a9bde3" stroke-width="0.8"/><line x1="500.20" x2="500.20" y1="342.5" y2="344.0" stroke="#a9bde3" stroke-width="0.6"/><line x1="507.67" x2="507.67" y1="342.5" y2="344.0" stroke="#a9bde3" stroke-width="0.6"/><line x1="515.13" x2="515.13" y1="342.5" y2="344.0" stroke="#a9bde3" stroke-width="0.6"/><line x1="522.60" x2="522.60" y1="342.5" y2="344.0" stroke="#a9bde3" stroke-width="0.6"/><line x1="530.06" x2="530.06" y1="342.5" y2="345.5" stroke="#a9bde3" stroke-width="0.8"/><line x1="537.52" x2="537.52" y1="342.5" y2="344.0" stroke="#a9bde3" stroke-width="0.6"/><line x1="544.99" x2="544.99" y1="342.5" y2="344.0" stroke="#a9bde3" stroke-width="0.6"/><line x1="552.45" x2="552.45" y1="342.5" y2="344.0" stroke="#a9bde3" stroke-width="0.6"/><line x1="559.92" x2="559.92" y1="342.5" y2="344.0" stroke="#a9bde3" stroke-width="0.6"/><line x1="567.38" x2="567.38" y1="342.5" y2="345.5" stroke="#a9bde3" stroke-width="0.8"/><line x1="574.84" x2="574.84" y1="342.5" y2="344.0" stroke="#a9bde3" stroke-width="0.6"/><line x1="582.31" x2="582.31" y1="342.5" y2="344.0" stroke="#a9bde3" stroke-width="0.6"/><line x1="589.77" x2="589.77" y1="342.5" y2="344.0" stroke="#a9bde3" stroke-width="0.6"/><line x1="597.24" x2="597.24" y1="342.5" y2="344.0" stroke="#a9bde3" stroke-width="0.6"/><line x1="604.70" x2="604.70" y1="342.5" y2="345.5" stroke="#a9bde3" stroke-width="0.8"/><line x1="612.16" x2="612.16" y1="342.5" y2="344.0" stroke="#a9bde3" stroke-width="0.6"/><line x1="619.63" x2="619.63" y1="342.5" y2="344.0" stroke="#a9bde3" stroke-width="0.6"/><line x1="627.09" x2="627.09" y1="342.5" y2="344.0" stroke="#a9bde3" stroke-width="0.6"/><line x1="634.56" x2="634.56" y1="342.5" y2="344.0" stroke="#a9bde3" stroke-width="0.6"/><line x1="642.02" x2="642.02" y1="342.5" y2="345.5" stroke="#a9bde3" stroke-width="0.8"/><line x1="649.48" x2="649.48" y1="342.5" y2="344.0" stroke="#a9bde3" stroke-width="0.6"/><line x1="656.95" x2="656.95" y1="342.5" y2="344.0" stroke="#a9bde3" stroke-width="0.6"/><line x1="664.41" x2="664.41" y1="342.5" y2="344.0" stroke="#a9bde3" stroke-width="0.6"/><line x1="671.88" x2="671.88" y1="342.5" y2="344.0" stroke="#a9bde3" stroke-width="0.6"/><line x1="679.34" x2="679.34" y1="342.5" y2="345.5" stroke="#a9bde3" stroke-width="0.8"/><line x1="686.80" x2="686.80" y1="342.5" y2="344.0" stroke="#a9bde3" stroke-width="0.6"/><line x1="694.27" x2="694.27" y1="342.5" y2="344.0" stroke="#a9bde3" stroke-width="0.6"/><line x1="701.73" x2="701.73" y1="342.5" y2="344.0" stroke="#a9bde3" stroke-width="0.6"/><line x1="709.20" x2="709.20" y1="342.5" y2="344.0" stroke="#a9bde3" stroke-width="0.6"/><line x1="716.66" x2="716.66" y1="342.5" y2="345.5" stroke="#a9bde3" stroke-width="0.8"/><line x1="724.12" x2="724.12" y1="342.5" y2="344.0" stroke="#a9bde3" stroke-width="0.6"/><line x1="731.59" x2="731.59" y1="342.5" y2="344.0" stroke="#a9bde3" stroke-width="0.6"/><line x1="739.05" x2="739.05" y1="342.5" y2="344.0" stroke="#a9bde3" stroke-width="0.6"/><line x1="746.52" x2="746.52" y1="342.5" y2="344.0" stroke="#a9bde3" stroke-width="0.6"/><polygon points="231.50,266.93 268.82,254.39 306.14,246.29 343.46,225.40 380.78,214.69 418.10,233.76 455.42,264.84 492.74,261.44 530.06,262.49 567.38,245.51 604.70,226.97 642.02,219.65 679.34,233.23 716.66,265.36 716.66,330.40 679.34,296.18 642.02,284.17 604.70,291.74 567.38,311.59 530.06,326.22 492.74,327.79 455.42,329.88 418.10,297.49 380.78,279.47 343.46,289.91 306.14,311.59 268.82,321.00 231.50,330.92" fill="#c3ddf4"/><polyline points="231.50,302.19 268.82,291.48 306.14,282.08 343.46,261.44 380.78,250.21 418.10,269.10 455.42,300.62 492.74,297.23 530.06,298.27 567.38,283.65 604.70,262.49 642.02,255.44 679.34,269.54 716.66,300.62" fill="none" stroke="#86bdea" stroke-width="0.9"/><polyline points="231.50,312.90 268.82,301.67 306.14,283.38 343.46,261.70 380.78,269.02 418.10,283.65 455.42,297.88 492.74,298.27 530.06,298.27 567.38,301.41 604.70,264.32 642.02,257.79 679.34,294.62 716.66,305.33" fill="none" stroke="#a59a92" stroke-width="0.9"/></svg>
<div class="t k" style="font-size:5.30px;color:#333;top:207px;transform:scaleX(0.9377);left:-104.9px;width:300px;text-align:right;transform-origin:100% 0;">400.00</div>
<div class="t k" style="font-size:5.30px;color:#333;top:220px;transform:scaleX(0.9377);left:-104.9px;width:300px;text-align:right;transform-origin:100% 0;">350.00</div>
<div class="t k" style="font-size:5.30px;color:#333;top:233px;transform:scaleX(0.9377);left:-104.9px;width:300px;text-align:right;transform-origin:100% 0;">300.00</div>
<div class="t k" style="font-size:5.30px;color:#333;top:246px;transform:scaleX(0.9377);left:-104.9px;width:300px;text-align:right;transform-origin:100% 0;">250.00</div>
<div class="t k" style="font-size:5.30px;color:#333;top:259px;transform:scaleX(0.9377);left:-104.9px;width:300px;text-align:right;transform-origin:100% 0;">200.00</div>
<div class="t k" style="font-size:5.30px;color:#333;top:272px;transform:scaleX(0.9377);left:-104.9px;width:300px;text-align:right;transform-origin:100% 0;">150.00</div>
<div class="t k" style="font-size:5.30px;color:#333;top:285px;transform:scaleX(0.9377);left:-104.9px;width:300px;text-align:right;transform-origin:100% 0;">100.00</div>
<div class="t k" style="font-size:5.30px;color:#333;top:298px;transform:scaleX(0.9377);left:-104.9px;width:300px;text-align:right;transform-origin:100% 0;">50.00</div>
<div class="t k" style="font-size:5.30px;color:#333;top:311px;transform:scaleX(0.9377);left:-104.9px;width:300px;text-align:right;transform-origin:100% 0;">0.00</div>
<div class="t k" style="font-size:5.30px;color:#333;top:324px;transform:scaleX(0.9377);left:-104.9px;width:300px;text-align:right;transform-origin:100% 0;">-50.00</div>
<div class="t k" style="font-size:5.30px;color:#333;top:337px;transform:scaleX(0.9377);left:-104.9px;width:300px;text-align:right;transform-origin:100% 0;">-100.00</div>
<div class="t k" style="font-size:5.45px;color:#333;top:347px;transform:scaleX(0.9358);left:131.5px;width:200px;text-align:center;transform-origin:50% 0;">1/1/2019</div>
<div class="t k" style="font-size:5.45px;color:#333;top:347px;transform:scaleX(0.9358);left:168.82px;width:200px;text-align:center;transform-origin:50% 0;">1/2/2019</div>
<div class="t k" style="font-size:5.45px;color:#333;top:347px;transform:scaleX(0.9358);left:206.14px;width:200px;text-align:center;transform-origin:50% 0;">1/3/2019</div>
<div class="t k" style="font-size:5.45px;color:#333;top:347px;transform:scaleX(0.9358);left:243.46000000000004px;width:200px;text-align:center;transform-origin:50% 0;">1/4/2019</div>
<div class="t k" style="font-size:5.45px;color:#333;top:347px;transform:scaleX(0.9358);left:280.78px;width:200px;text-align:center;transform-origin:50% 0;">1/5/2019</div>
<div class="t k" style="font-size:5.45px;color:#333;top:347px;transform:scaleX(0.9358);left:318.1px;width:200px;text-align:center;transform-origin:50% 0;">1/6/2019</div>
<div class="t k" style="font-size:5.45px;color:#333;top:347px;transform:scaleX(0.9358);left:355.42px;width:200px;text-align:center;transform-origin:50% 0;">1/7/2019</div>
<div class="t k" style="font-size:5.45px;color:#333;top:347px;transform:scaleX(0.9358);left:392.74px;width:200px;text-align:center;transform-origin:50% 0;">1/8/2019</div>
<div class="t k" style="font-size:5.45px;color:#333;top:347px;transform:scaleX(0.9358);left:430.05999999999995px;width:200px;text-align:center;transform-origin:50% 0;">1/9/2019</div>
<div class="t k" style="font-size:5.45px;color:#333;top:347px;transform:scaleX(0.9358);left:467.38px;width:200px;text-align:center;transform-origin:50% 0;">1/10/2019</div>
<div class="t k" style="font-size:5.45px;color:#333;top:347px;transform:scaleX(0.9358);left:504.70000000000005px;width:200px;text-align:center;transform-origin:50% 0;">1/11/2019</div>
<div class="t k" style="font-size:5.45px;color:#333;top:347px;transform:scaleX(0.9358);left:542.02px;width:200px;text-align:center;transform-origin:50% 0;">1/12/2019</div>
<div class="t k" style="font-size:5.45px;color:#333;top:347px;transform:scaleX(0.9358);left:579.34px;width:200px;text-align:center;transform-origin:50% 0;">1/13/2019</div>
<div class="t k" style="font-size:5.45px;color:#333;top:347px;transform:scaleX(0.9358);left:616.6600000000001px;width:200px;text-align:center;transform-origin:50% 0;">1/14/2019</div>
<div class="a" style="left:420.3px;top:199.3px;width:95.7px;height:40.4px;background:#d8e3f6;border:1px solid #aec2e6"></div>
<div class="t k" style="font-size:6.10px;color:#333;top:203px;transform:scaleX(0.9344);left:423.2px;transform-origin:0 0;">1/6/2019</div>
<div class="a" style="left:422.6px;top:214.7px;width:5.2px;height:1.1px;background:#8ec3ee"></div>
<div class="t k" style="font-size:5.80px;color:#333;top:213px;transform:scaleX(0.9310);left:430px;transform-origin:0 0;">1 - Scenario 1 - Forecast: 167.72</div>
<div class="a" style="left:422.6px;top:224px;width:5.2px;height:1.1px;background:#e8853a"></div>
<div class="t k" style="font-size:5.80px;color:#333;top:223px;transform:scaleX(0.9310);left:430px;transform-origin:0 0;">1 - Scenario 1 - Actuals: 112.00</div>
<svg class="a" style="left:422.6px;top:231.3px;" width="5.2" height="3.4" viewBox="0 0 5.2 3.4"><path d="M0.3 3.1L2.6 0.5 4.9 3.1" fill="none" stroke="#9cc8ee" stroke-width="0.9"/></svg>
<div class="t k" style="font-size:5.80px;color:#333;top:232px;transform:scaleX(0.9310);left:430px;transform-origin:0 0;">1 - Scenario 1 - PI: 303.12 - 59.01</div>
<div class="a" style="left:168.7px;top:362px;width:588px;height:25.3px;border:1px solid #b3c5e8;background:#fff"></div>
<svg class="a" style="left:0;top:0" width="768" height="428" viewBox="0 0 768 428"><defs><clipPath id="nc"><rect x="170" y="363" width="586" height="24"/></clipPath></defs><g clip-path="url(#nc)"><line x1="169" x2="756" y1="376.3" y2="376.3" stroke="#a9bde3" stroke-width="0.8"/><line x1="169.20" x2="169.20" y1="376.3" y2="378.8" stroke="#a9bde3" stroke-width="0.6"/><line x1="180.47" x2="180.47" y1="376.3" y2="377.8" stroke="#a9bde3" stroke-width="0.6"/><line x1="191.74" x2="191.74" y1="376.3" y2="377.8" stroke="#a9bde3" stroke-width="0.6"/><line x1="203.01" x2="203.01" y1="376.3" y2="377.8" stroke="#a9bde3" stroke-width="0.6"/><line x1="214.28" x2="214.28" y1="376.3" y2="378.8" stroke="#a9bde3" stroke-width="0.6"/><line x1="225.55" x2="225.55" y1="376.3" y2="377.8" stroke="#a9bde3" stroke-width="0.6"/><line x1="236.82" x2="236.82" y1="376.3" y2="377.8" stroke="#a9bde3" stroke-width="0.6"/><line x1="248.09" x2="248.09" y1="376.3" y2="377.8" stroke="#a9bde3" stroke-width="0.6"/><line x1="259.36" x2="259.36" y1="376.3" y2="378.8" stroke="#a9bde3" stroke-width="0.6"/><line x1="270.63" x2="270.63" y1="376.3" y2="377.8" stroke="#a9bde3" stroke-width="0.6"/><line x1="281.90" x2="281.90" y1="376.3" y2="377.8" stroke="#a9bde3" stroke-width="0.6"/><line x1="293.17" x2="293.17" y1="376.3" y2="377.8" stroke="#a9bde3" stroke-width="0.6"/><line x1="304.44" x2="304.44" y1="376.3" y2="378.8" stroke="#a9bde3" stroke-width="0.6"/><line x1="315.71" x2="315.71" y1="376.3" y2="377.8" stroke="#a9bde3" stroke-width="0.6"/><line x1="326.98" x2="326.98" y1="376.3" y2="377.8" stroke="#a9bde3" stroke-width="0.6"/><line x1="338.25" x2="338.25" y1="376.3" y2="377.8" stroke="#a9bde3" stroke-width="0.6"/><line x1="349.52" x2="349.52" y1="376.3" y2="378.8" stroke="#a9bde3" stroke-width="0.6"/><line x1="360.79" x2="360.79" y1="376.3" y2="377.8" stroke="#a9bde3" stroke-width="0.6"/><line x1="372.06" x2="372.06" y1="376.3" y2="377.8" stroke="#a9bde3" stroke-width="0.6"/><line x1="383.33" x2="383.33" y1="376.3" y2="377.8" stroke="#a9bde3" stroke-width="0.6"/><line x1="394.60" x2="394.60" y1="376.3" y2="378.8" stroke="#a9bde3" stroke-width="0.6"/><line x1="405.87" x2="405.87" y1="376.3" y2="377.8" stroke="#a9bde3" stroke-width="0.6"/><line x1="417.14" x2="417.14" y1="376.3" y2="377.8" stroke="#a9bde3" stroke-width="0.6"/><line x1="428.41" x2="428.41" y1="376.3" y2="377.8" stroke="#a9bde3" stroke-width="0.6"/><line x1="439.68" x2="439.68" y1="376.3" y2="378.8" stroke="#a9bde3" stroke-width="0.6"/><line x1="450.95" x2="450.95" y1="376.3" y2="377.8" stroke="#a9bde3" stroke-width="0.6"/><line x1="462.22" x2="462.22" y1="376.3" y2="377.8" stroke="#a9bde3" stroke-width="0.6"/><line x1="473.49" x2="473.49" y1="376.3" y2="377.8" stroke="#a9bde3" stroke-width="0.6"/><line x1="484.76" x2="484.76" y1="376.3" y2="378.8" stroke="#a9bde3" stroke-width="0.6"/><line x1="496.03" x2="496.03" y1="376.3" y2="377.8" stroke="#a9bde3" stroke-width="0.6"/><line x1="507.30" x2="507.30" y1="376.3" y2="377.8" stroke="#a9bde3" stroke-width="0.6"/><line x1="518.57" x2="518.57" y1="376.3" y2="377.8" stroke="#a9bde3" stroke-width="0.6"/><line x1="529.84" x2="529.84" y1="376.3" y2="378.8" stroke="#a9bde3" stroke-width="0.6"/><line x1="541.11" x2="541.11" y1="376.3" y2="377.8" stroke="#a9bde3" stroke-width="0.6"/><line x1="552.38" x2="552.38" y1="376.3" y2="377.8" stroke="#a9bde3" stroke-width="0.6"/><line x1="563.65" x2="563.65" y1="376.3" y2="377.8" stroke="#a9bde3" stroke-width="0.6"/><line x1="574.92" x2="574.92" y1="376.3" y2="378.8" stroke="#a9bde3" stroke-width="0.6"/><line x1="586.19" x2="586.19" y1="376.3" y2="377.8" stroke="#a9bde3" stroke-width="0.6"/><line x1="597.46" x2="597.46" y1="376.3" y2="377.8" stroke="#a9bde3" stroke-width="0.6"/><line x1="608.73" x2="608.73" y1="376.3" y2="377.8" stroke="#a9bde3" stroke-width="0.6"/><line x1="620.00" x2="620.00" y1="376.3" y2="378.8" stroke="#a9bde3" stroke-width="0.6"/><line x1="631.27" x2="631.27" y1="376.3" y2="377.8" stroke="#a9bde3" stroke-width="0.6"/><line x1="642.54" x2="642.54" y1="376.3" y2="377.8" stroke="#a9bde3" stroke-width="0.6"/><line x1="653.81" x2="653.81" y1="376.3" y2="377.8" stroke="#a9bde3" stroke-width="0.6"/><line x1="665.08" x2="665.08" y1="376.3" y2="378.8" stroke="#a9bde3" stroke-width="0.6"/><line x1="676.35" x2="676.35" y1="376.3" y2="377.8" stroke="#a9bde3" stroke-width="0.6"/><line x1="687.62" x2="687.62" y1="376.3" y2="377.8" stroke="#a9bde3" stroke-width="0.6"/><line x1="698.89" x2="698.89" y1="376.3" y2="377.8" stroke="#a9bde3" stroke-width="0.6"/><line x1="710.16" x2="710.16" y1="376.3" y2="378.8" stroke="#a9bde3" stroke-width="0.6"/><line x1="721.43" x2="721.43" y1="376.3" y2="377.8" stroke="#a9bde3" stroke-width="0.6"/><line x1="732.70" x2="732.70" y1="376.3" y2="377.8" stroke="#a9bde3" stroke-width="0.6"/><line x1="743.97" x2="743.97" y1="376.3" y2="377.8" stroke="#a9bde3" stroke-width="0.6"/><line x1="755.24" x2="755.24" y1="376.3" y2="378.8" stroke="#a9bde3" stroke-width="0.6"/><path d="M169.20,375.00 C176.71,374.58 199.25,373.25 214.28,372.50 C229.31,371.75 244.33,371.67 259.36,370.50 C274.39,369.33 289.41,366.02 304.44,365.50 C319.47,364.98 334.49,366.68 349.52,367.40 C364.55,368.12 379.57,368.75 394.60,369.80 C409.63,370.85 424.65,373.07 439.68,373.70 C454.71,374.33 469.73,373.63 484.76,373.60 C499.79,373.57 514.81,373.43 529.84,373.50 C544.87,373.57 559.89,375.25 574.92,374.00 C589.95,372.75 604.97,367.45 620.00,366.00 C635.03,364.55 650.05,364.08 665.08,365.30 C680.11,366.52 695.13,371.68 710.16,373.30 C725.19,374.92 747.73,374.72 755.24,375.00" fill="none" stroke="#97a4a8" stroke-width="0.8"/><path d="M169.20,374.00 C176.71,373.88 199.25,373.93 214.28,373.30 C229.31,372.67 244.33,371.70 259.36,370.20 C274.39,368.70 289.41,365.35 304.44,364.30 C319.47,363.25 334.49,362.98 349.52,363.90 C364.55,364.82 379.57,368.17 394.60,369.80 C409.63,371.43 424.65,373.07 439.68,373.70 C454.71,374.33 469.73,373.80 484.76,373.60 C499.79,373.40 514.81,373.13 529.84,372.50 C544.87,371.87 559.89,371.02 574.92,369.80 C589.95,368.58 604.97,365.95 620.00,365.20 C635.03,364.45 650.05,364.53 665.08,365.30 C680.11,366.07 695.13,368.85 710.16,369.80 C725.19,370.75 747.73,370.80 755.24,371.00" fill="none" stroke="#5d6c72" stroke-width="0.8"/></g></svg>
<div class="a" style="left:170.2px;top:363px;width:33.8px;height:9.5px;background:#7092d2"></div>
<div class="t k" style="font-size:6.00px;color:#fff;top:365px;transform:scaleX(0.9333);left:87.1px;width:200px;text-align:center;transform-origin:50% 0;">1/1/2019</div>
<div class="a" style="left:169.7px;top:372.5px;width:3.4px;height:14.5px;background:#6f8fd0"></div>
<div class="a" style="left:170.8px;top:375px;width:1.2px;height:3px;background:#dfe8f8"></div>
<div class="a" style="left:718.4px;top:363px;width:37.9px;height:9.5px;background:#7092d2"></div>
<div class="t k" style="font-size:6.00px;color:#fff;top:365px;transform:scaleX(0.9333);left:637.2px;width:200px;text-align:center;transform-origin:50% 0;">1/14/2019</div>
<div class="a" style="left:752.4px;top:372.5px;width:3.8px;height:14.5px;background:#6f8fd0"></div>
<div class="a" style="left:753.7px;top:375px;width:1.2px;height:3px;background:#dfe8f8"></div>
<div class="a" style="left:174px;top:378px;width:578.4px;height:9px;overflow:hidden">
<div class="t k" style="font-size:5.40px;color:#333;top:3px;transform:scaleX(0.9370);left:-2.2px;transform-origin:0 0;">1/1/2019</div>
<div class="t k" style="font-size:5.40px;color:#333;top:3px;transform:scaleX(0.9370);left:-59.72px;width:200px;text-align:center;transform-origin:50% 0;">1/2/2019</div>
<div class="t k" style="font-size:5.40px;color:#333;top:3px;transform:scaleX(0.9370);left:-14.64px;width:200px;text-align:center;transform-origin:50% 0;">1/3/2019</div>
<div class="t k" style="font-size:5.40px;color:#333;top:3px;transform:scaleX(0.9370);left:30.439999999999998px;width:200px;text-align:center;transform-origin:50% 0;">1/4/2019</div>
<div class="t k" style="font-size:5.40px;color:#333;top:3px;transform:scaleX(0.9370);left:75.52000000000001px;width:200px;text-align:center;transform-origin:50% 0;">1/5/2019</div>
<div class="t k" style="font-size:5.40px;color:#333;top:3px;transform:scaleX(0.9370);left:120.6px;width:200px;text-align:center;transform-origin:50% 0;">1/6/2019</div>
<div class="t k" style="font-size:5.40px;color:#333;top:3px;transform:scaleX(0.9370);left:165.68px;width:200px;text-align:center;transform-origin:50% 0;">1/7/2019</div>
<div class="t k" style="font-size:5.40px;color:#333;top:3px;transform:scaleX(0.9370);left:210.76px;width:200px;text-align:center;transform-origin:50% 0;">1/8/2019</div>
<div class="t k" style="font-size:5.40px;color:#333;top:3px;transform:scaleX(0.9370);left:255.83999999999997px;width:200px;text-align:center;transform-origin:50% 0;">1/9/2019</div>
<div class="t k" style="font-size:5.40px;color:#333;top:3px;transform:scaleX(0.9370);left:300.92px;width:200px;text-align:center;transform-origin:50% 0;">1/10/2019</div>
<div class="t k" style="font-size:5.40px;color:#333;top:3px;transform:scaleX(0.9370);left:346.0px;width:200px;text-align:center;transform-origin:50% 0;">1/11/2019</div>
<div class="t k" style="font-size:5.40px;color:#333;top:3px;transform:scaleX(0.9370);left:391.08px;width:200px;text-align:center;transform-origin:50% 0;">1/12/2019</div>
<div class="t k" style="font-size:5.40px;color:#333;top:3px;transform:scaleX(0.9370);left:436.15999999999997px;width:200px;text-align:center;transform-origin:50% 0;">1/13/2019</div>
<div class="t k" style="font-size:5.40px;color:#333;top:3px;transform:scaleX(0.9370);left:280.9px;width:300px;text-align:right;transform-origin:100% 0;">1/14/2019</div>
</div>
<div class="a" style="left:35.5px;top:397px;width:727px;height:16.8px;background:#223142"></div>
<svg class="a" style="left:43px;top:402px;" width="7" height="7" viewBox="0 0 7 7"><path d="M0.4 4.2L2.2 2.4 3.6 3.6 6.2 0.8" fill="none" stroke="#dce6f2" stroke-width="0.8"/><path d="M3.2 2.6l2.3 2.6M5.5 5.2L6.5 6.4" fill="none" stroke="#dce6f2" stroke-width="0.8"/></svg>
<div class="t k" style="font-size:7.00px;color:#b5d0ec;top:402px;transform:scaleX(0.9314);left:51.4px;transform-origin:0 0;">Build Statistics</div>
<div class="t k" style="font-size:5.75px;color:#3d8fd8;top:404px;transform:scaleX(0.9339);left:106.25px;transform-origin:0 0;">Health Score:</div>
<div class="t k" style="font-size:5.55px;color:#f4f6f8;top:404px;transform:scaleX(0.9369);left:140px;transform-origin:0 0;">0</div>
<div class="t k" style="font-size:5.65px;color:#3d8fd8;top:404px;transform:scaleX(0.9345);left:155.6px;transform-origin:0 0;">Next Forecast:</div>
<div class="t k" style="font-size:5.50px;color:#f4f6f8;top:404px;transform:scaleX(0.9327);left:191.5px;transform-origin:0 0;">No Forecasts Scheduled</div>
<div class="t k" style="font-size:5.50px;color:#3d8fd8;top:404px;transform:scaleX(0.9327);left:260.8px;transform-origin:0 0;">Last Forecast:</div>
<div class="t k" style="font-size:5.65px;color:#f4f6f8;top:404px;transform:scaleX(0.9345);left:295.2px;transform-origin:0 0;">6/20/2023 5:53:57 PM</div>
<div class="t k" style="font-size:5.60px;color:#3d8fd8;top:404px;transform:scaleX(0.9375);left:359.8px;transform-origin:0 0;">Forecast Range:</div>
<div class="t k" style="font-size:5.55px;color:#f4f6f8;top:404px;transform:scaleX(0.9369);left:398.75px;transform-origin:0 0;">14 Days</div>
<div class="t k" style="font-size:6.00px;color:#3d8fd8;top:403px;transform:scaleX(0.9333);left:430px;transform-origin:0 0;">Total Targets:</div>
<div class="t k" style="font-size:5.55px;color:#f4f6f8;top:404px;transform:scaleX(0.9369);left:464px;transform-origin:0 0;">27</div>
<div class="t k" style="font-size:6.10px;color:#3d8fd8;top:403px;transform:scaleX(0.9377);left:483px;transform-origin:0 0;">Total Groups:</div>
<div class="t k" style="font-size:5.55px;color:#f4f6f8;top:404px;transform:scaleX(0.9369);left:517px;transform-origin:0 0;">1</div>
<div class="a" style="left:716px;top:399px;width:42.2px;height:13px;background:#3b92dc"></div>
<div class="t k" style="font-size:5.90px;color:#f4f8fc;top:404px;transform:scaleX(0.9322);left:637.1px;width:200px;text-align:center;transform-origin:50% 0;">Restart</div>
<div class="a" style="left:0px;top:414.5px;width:768px;height:13.5px;background:#2f6db3"></div>
<div class="a" style="left:0px;top:413.8px;width:768px;height:0.8px;background:#d9dde3"></div>
<div class="a" style="left:2px;top:415px;width:49px;height:13px;background:#fff"></div>
<div class="t k" style="font-size:5.95px;color:#333;top:419px;transform:scaleX(0.9361);left:5.6px;transform-origin:0 0;">Dashboard - Sen</div>
<div class="t k" style="font-size:6.00px;color:#dfe9f6;top:418px;transform:scaleX(0.9333);left:56px;transform-origin:0 0;">New</div>
<svg class="a" style="left:685.8px;top:39px;" width="10.5" height="11" viewBox="0 0 10.5 11"><g fill="none" stroke="#2f7ad0" stroke-width="1.3"><path d="M3.9 2.1H2.4Q0.9 2.1 0.9 3.6V7.6Q0.9 9.1 2.4 9.1H3.2"/><path d="M6.6 1.9H7.8Q9.3 1.9 9.3 3.4V7.4Q9.3 8.9 7.8 8.9H6.4"/></g><path d="M3.6 0.2L5.6 2.1 3.6 4z" fill="#2f7ad0"/><path d="M6.7 7L4.7 8.9 6.7 10.8z" fill="#2f7ad0"/></svg>
<svg class="a" style="left:703.2px;top:39px;" width="9" height="10.5" viewBox="0 0 9 10.5"><path d="M0.6 0.6h5.4l2.4 2.4v6.9H0.6z" fill="#ededed" stroke="#b5b5b5" stroke-width="0.9"/><path d="M6 0.6v2.4h2.4z" fill="#777"/><path d="M2 3.6h3M2 5.2h4.6M2 6.8h4.6" stroke="#c4c4c4" stroke-width="0.6"/></svg>
<svg class="a" style="left:719.3px;top:39.2px;" width="10" height="10.5" viewBox="0 0 10 10.5"><path d="M5 0.2L0 5.1h1V10.2h3V7h2v3.2h3V5.1h1z" fill="#5c6873"/></svg>
<svg class="a" style="left:736.7px;top:38.7px;" width="9.5" height="10.8" viewBox="0 0 9.5 10.8"><g fill="#5c6873"><path d="M0 1.6Q4.75 -0.6 9.5 1.6V3Q4.75 5.2 0 3z"/><path d="M0 4.2Q4.75 6.4 9.5 4.2V6.2Q4.75 8.4 0 6.2z"/><path d="M0 7.4Q4.75 9.6 9.5 7.4V9.2Q4.75 11.4 0 9.2z"/></g></svg>
<svg class="a" style="left:753.3px;top:38.5px;" width="9.8" height="11.5" viewBox="0 0 9.8 11.5"><ellipse cx="4.9" cy="1.9" rx="4.3" ry="1.5" fill="none" stroke="#6a6f75" stroke-width="0.8"/><path d="M0.6 1.9V9.4Q4.9 11.8 9.2 9.4V1.9" fill="none" stroke="#6a6f75" stroke-width="0.8"/><circle cx="5.2" cy="7.2" r="2.3" fill="#5c6873"/><circle cx="5.2" cy="7.2" r="0.9" fill="#cfd4d9"/></svg>
</body></html>
